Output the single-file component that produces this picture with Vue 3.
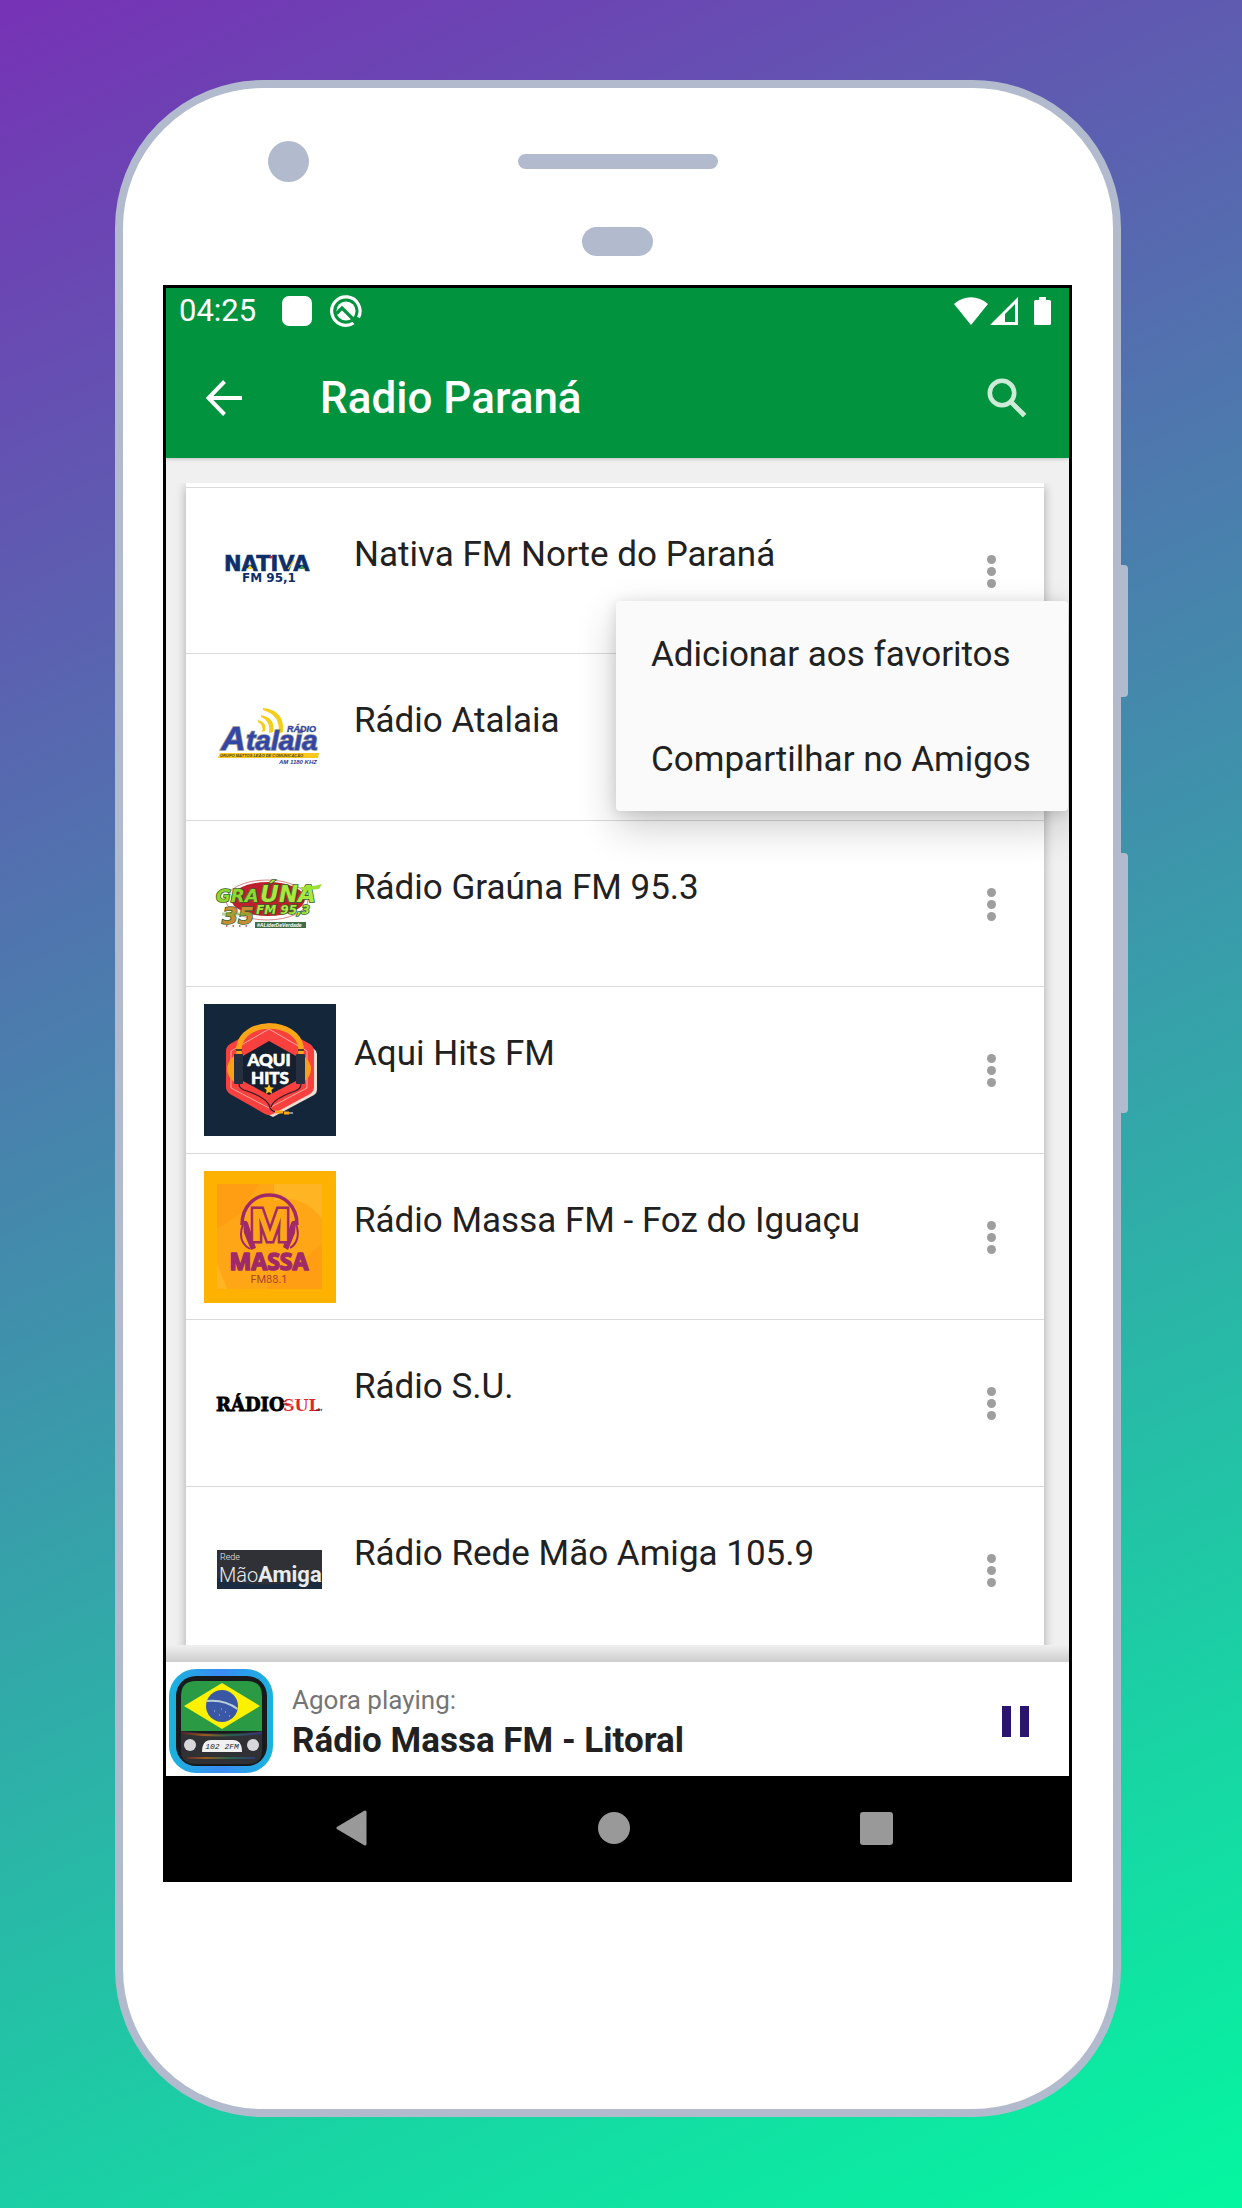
<template>
  <div class="page">
    <div class="phone">
      <i class="side-key side-key-power"></i>
      <i class="side-key side-key-volume"></i>

      <div class="phone-top">
        <i class="camera"></i>
        <i class="speaker"></i>
        <i class="sensor"></i>
      </div>

      <div class="screen">
        <header class="header">
          <div class="status-bar">
            <span class="clock">04:25</span>
            <i class="status-square"></i>
            <svg class="status-q" viewBox="0 0 32 32">
              <path d="M23.500 28A14.200 14.200 0 1 1 28.500 22.500" fill="none" stroke="#fff" stroke-width="3.200" />
              <circle cx="16" cy="16" r="9.600" fill="#fff" />
              <path d="M6.500 18.500l5.500-5.500L26.500 27.500" fill="none" stroke="#02933f" stroke-width="3.200" />
              <path d="M13 17.500l6 6" stroke="#fff" stroke-width="1" />
            </svg>
            <svg class="status-wifi" viewBox="0 0 34 28">
              <path d="M0 7C10-2 24-2 34 7L17 28z" fill="#fff" />
            </svg>
            <svg class="status-signal" viewBox="0 0 28 28">
              <path fill-rule="evenodd" d="M28 0v28H0zM25 7l-10 10v8h10z" fill="#fff" />
            </svg>
            <svg class="status-battery" viewBox="0 0 17 28">
              <path d="M5 0h7v3h3.500q1.500 0 1.500 1.500v22q0 1.500-1.500 1.500h-14Q0 28 0 26.500v-22Q0 3 1.500 3H5z" fill="#fff" />
            </svg>
          </div>
          <div class="app-bar">
            <button class="icon-btn" type="button" aria-label="Voltar">
              <svg width="36" height="36" viewBox="0 0 36 36">
                <path d="M18.500 1.500L2.500 18l16 16.500M2.500 18H36" fill="none" stroke="#fff" stroke-width="4" />
              </svg>
            </button>
            <h1 class="title">Radio Paraná</h1>
            <button class="icon-btn" type="button" aria-label="Buscar">
              <svg width="40" height="40" viewBox="0 0 40 40">
                <circle cx="15" cy="15" r="12.200" fill="none" stroke="#cdebd6" stroke-width="4.600" />
                <path d="M23 23h3l13 12.800-3.200 3.200L23 26z" fill="#cdebd6" stroke="#cdebd6" stroke-width="0.800" />
              </svg>
            </button>
          </div>
        </header>

        <main class="content">
          <ul class="stations">
            <li v-for="station in stations" :key="station.id" class="station">
              <svg class="logo" viewBox="0 0 132 132" aria-hidden="true">
                <g v-if="station.id === 'nativa'" fill="#0c2f6b">
                  <text x="20" y="66" class="dv" font-size="21" stroke="#0c2f6b" stroke-width="0.600">NATIVA</text>
                  <path d="M43 64l3-4 3 4z" fill="#f0d020" />
                  <path d="M65 51h4l-2 3z" fill="#d4262c" />
                  <path d="M84 64l6-9" stroke="#e8d22a" stroke-width="1.200" />
                  <path d="M95 64l3-4 3 4z" fill="#3a9b46" />
                  <text x="38" y="77" class="dv" font-size="12">FM 95,1</text>
                </g>

                <g v-else-if="station.id === 'atalaia'">
                  <path d="M59 37q22 2 20 24l-5 2q4-18-15-24z" fill="#f5cd1c" />
                  <path d="M57 44q15 3 12 17l-4 1q2-12-8-16z" fill="#f5cd1c" />
                  <path d="M54 49q10 3 7 11l-3 1q2-7-4-10z" fill="#f5cd1c" />
                  <g class="ls" fill="#3346a6" stroke="#8f9298" stroke-width="1.600" paint-order="stroke">
                    <text x="17" y="79" font-size="34">A</text>
                    <text x="42" y="79" font-size="28">talaia</text>
                    <text x="83" y="61" font-size="9" stroke-width="0.600">RÁDIO</text>
                  </g>
                  <path d="M16 82h99l-1 5H14z" fill="#f8c81d" />
                  <text x="16" y="86" class="ls" font-size="4" fill="#4b4428">GRUPO MATTOS LEÃO DE COMUNICAÇÃO</text>
                  <text x="75" y="93" class="ls" font-size="6" fill="#2b3990">AM 1180 KHZ</text>
                </g>

                <g v-else-if="station.id === 'grauna'">
                  <ellipse cx="63" cy="62" rx="41" ry="20" fill="none" stroke="#d0636a" stroke-width="0.800" />
                  <ellipse cx="64" cy="61" rx="37" ry="17" fill="#bd1f2d" />
                  <g class="dv-it" stroke="#35632a" stroke-width="1.600" paint-order="stroke">
                    <text x="12" y="64" font-size="18" fill="#8fd62e">GRA</text>
                    <text x="56" y="64" font-size="23" fill="#a9e83f">ÚNA</text>
                    <text x="18" y="86" font-size="23" fill="#c98d35">35</text>
                    <text x="52" y="76" font-size="12" fill="#a9e83f">FM 95,3</text>
                  </g>
                  <path d="M96 49q12 0 22-3l-3 5q-8 1-17 1z" fill="#9be037" />
                  <path d="M18 76h30" stroke="#6fae35" stroke-width="3" opacity="0.500" />
                  <path d="M22 88h24" stroke="#b0454b" stroke-width="1.500" stroke-dasharray="1.500 5" />
                  <rect x="51" y="84" width="51" height="6" fill="#3f6d47" />
                  <text x="53" y="89" class="ls" font-size="5" fill="#fff">#ALíderDeVerdade</text>
                </g>

                <g v-else-if="station.id === 'aqui'">
                  <rect width="132" height="132" fill="#14263a" />
                  <path d="M69 22l41 23q3 2 3 5v36q0 3-3 5l-41 22-12-6z" fill="#f0ded4" />
                  <path d="M61 20q4-2 8 0l37 20q4 3 4 7v36q0 4-4 7l-37 20q-4 2-8 0L26 90q-4-3-4-7V47q0-4 4-7z" fill="#f8413f" />
                  <path d="M65 25l38 22v37l-38 20-38-20V47z" fill="none" stroke="#ffc4b8" stroke-width="0.800" />
                  <path d="M30 52q-7 6-7 13t7 13zM100 52q7 6 7 13t-7 13z" fill="#f9a11b" />
                  <path d="M65 37l27 15v25L65 91 39 77V52z" fill="#14202f" />
                  <path d="M35 50v-7c4-28 57-28 62 0v7" fill="none" stroke="#fba518" stroke-width="5.500" />
                  <path d="M32 46h6M94 46h6" stroke="#14202f" stroke-width="1.500" />
                  <rect x="30" y="50" width="9" height="30" rx="1" fill="#252f40" />
                  <rect x="92" y="50" width="9" height="30" rx="1" fill="#252f40" />
                  <path d="M35 80q0 4 5 6 25 8 26 18 2 4 8 4M97 80q0 5-6 7-22 8-24 16" fill="none" stroke="#2c1a25" stroke-width="1.200" />
                  <path d="M71 108h8M80 109h5" stroke="#fba518" stroke-width="3" />
                  <path d="M85 109h4" stroke="#fff" stroke-width="1" />
                  <g class="lato" fill="#fff" stroke="#fff" stroke-width="0.600" text-anchor="middle">
                    <text x="65" y="62" font-size="17">AQUI</text>
                    <text x="66" y="80" font-size="17">HITS</text>
                  </g>
                  <path d="M65 80l1.500 3.300 3.500.4-2.600 2.400.7 3.600L65 88l-3.100 1.700.7-3.600L60 83.700l3.500-.4z" fill="#fdbf1c" />
                </g>

                <g v-else-if="station.id === 'massa'">
                  <rect width="132" height="132" fill="#ffb100" />
                  <rect x="13" y="13" width="105" height="105" fill="#ffa617" />
                  <path d="M13 58l24-16 18-29H13zM62 118l56-45v45z" fill="#ff9410" opacity="0.500" />
                  <path d="M13 92l10 26H13zM70 13h48v35Q98 22 70 30z" fill="#ffbe2d" opacity="0.600" />
                  <g fill="none" stroke="#a02a68">
                    <path d="M38 54c0-40 55-40 55 0" stroke-width="3.500" />
                    <path d="M39 53c-4 11-2 20 7 25M92 53c4 11 1 20-6 24" stroke-width="2" />
                  </g>
                  <path d="M39 50q4-1 5 2l8 25-5 2-7-17zM92 50q-4-1-5 2l-8 24 5 3 7-17z" fill="#a02a68" />
                  <text x="66" y="70" class="rb" font-size="45" text-anchor="middle" fill="#ffa617" stroke="#a02a68" stroke-width="5" paint-order="stroke">M</text>
                  <text x="65" y="99" class="os" font-size="23" text-anchor="middle" fill="#a02a68" stroke="#a02a68" stroke-width="1.600" stroke-linejoin="round">MASSA</text>
                  <text x="65" y="112" class="rr" font-size="11" text-anchor="middle" fill="#a8452e">FM88.1</text>
                </g>

                <g v-else-if="station.id === 'sul'">
                  <text x="12" y="74" class="serif" font-size="18" stroke="#000" stroke-width="0.800">RÁDIO</text>
                  <text x="79" y="74" class="serif" font-size="16" fill="#e2232e">SUL</text>
                  <path d="M79 66l14-3M80 70l12-2M96 61l4 12" stroke="#fff" stroke-width="0.800" />
                  <text x="111" y="74" class="ls" font-size="4">.net</text>
                </g>

                <g v-else-if="station.id === 'amiga'">
                  <rect x="13" y="46" width="105" height="39" fill="#303136" />
                  <path d="M13 74q50 14 105-2v13H13z" fill="#1c2c40" />
                  <g fill="#e9ecef">
                    <text x="16" y="56" class="rl" font-size="9">Rede</text>
                    <text x="15" y="78" class="rl" font-size="20">Mão</text>
                    <text x="54" y="78" class="rb" font-size="22">Amiga</text>
                  </g>
                </g>
              </svg>

              <span class="name">{{ station.name }}</span>

              <button
                class="more-btn"
                type="button"
                :aria-label="'Opções de ' + station.name"
                @click="toggleMenu(station.id)"
              >
                <i></i><i></i><i></i>
              </button>

              <div v-if="openMenu === station.id" class="popup">
                <button
                  v-for="action in actions"
                  :key="action"
                  class="popup-item"
                  type="button"
                  @click="openMenu = null"
                >
                  {{ action }}
                </button>
              </div>
            </li>
          </ul>
        </main>

        <div class="player-shadow"></div>
        <section class="player">
          <svg class="player-icon" viewBox="0 0 104 104" aria-hidden="true">
            <defs>
              <linearGradient id="frame" x1="0" x2="1">
                <stop offset="0" stop-color="#19b4dc" />
                <stop offset="0.500" stop-color="#3a8bf5" />
                <stop offset="1" stop-color="#19b4dc" />
              </linearGradient>
              <linearGradient id="glow" x1="0" x2="1">
                <stop offset="0" stop-color="#4d2030" />
                <stop offset="0.300" stop-color="#9a5a1e" />
                <stop offset="0.600" stop-color="#25654c" />
                <stop offset="1" stop-color="#3a2d80" />
              </linearGradient>
            </defs>
            <rect width="104" height="104" rx="27" fill="url(#frame)" />
            <rect x="7" y="7" width="91" height="90" rx="20" fill="#17191b" />
            <path d="M12 62V27q0-15 15-15h51q15 0 15 15v35z" fill="#2a9a45" />
            <path d="M53 14l38 23-38 23-38-23z" fill="#fdf100" />
            <circle cx="53" cy="37" r="16" fill="#3a57a6" />
            <path d="M37.500 32q18-2 31 8" fill="none" stroke="#b9cfd8" stroke-width="2" />
            <path d="M45 42h1M50 46h1M56 43h1M60 47h1M52 40h1" stroke="#b9cfd8" stroke-width="1" />
            <path d="M12 62q40 5 81 0v20q0 13-14 13H27q-15 0-15-13z" fill="#303134" />
            <path d="M12 64q40 5 81 0M18 89h68" fill="none" stroke="url(#glow)" stroke-width="2" />
            <circle cx="21" cy="76" r="6" fill="#d8d8da" />
            <circle cx="84" cy="76" r="6" fill="#d8d8da" />
            <path d="M33 83q0-12 9-12h22q9 0 9 12z" fill="#f1f1f1" />
            <text x="53" y="80" class="lcd" font-size="8" text-anchor="middle" fill="#222">102 2FM</text>
          </svg>
          <div class="player-text">
            <span class="player-label">Agora playing:</span>
            <strong class="player-name">Rádio Massa FM - Litoral</strong>
          </div>
          <button class="icon-btn pause-btn" type="button" aria-label="Pausar">
            <svg width="27" height="31" viewBox="0 0 27 31">
              <path d="M0 0h9v31H0zM18 0h9v31h-9z" fill="#29146e" />
            </svg>
          </button>
        </section>

        <nav class="nav-bar">
          <button class="icon-btn" type="button" aria-label="Anterior">
            <svg width="32" height="36" viewBox="0 0 32 36">
              <path d="M2 18L29 2v32z" fill="#999" stroke="#999" stroke-width="3" stroke-linejoin="round" />
            </svg>
          </button>
          <button class="icon-btn" type="button" aria-label="Início">
            <svg width="32" height="32" viewBox="0 0 32 32"><circle cx="16" cy="16" r="16" fill="#999" /></svg>
          </button>
          <button class="icon-btn" type="button" aria-label="Recentes">
            <svg width="33" height="33" viewBox="0 0 33 33"><rect width="33" height="33" rx="3" fill="#999" /></svg>
          </button>
        </nav>
      </div>
    </div>
  </div>
</template>

<script setup>
import { ref } from "vue";

const stations = [
  { id: "nativa", name: "Nativa FM Norte do Paraná" },
  { id: "atalaia", name: "Rádio Atalaia" },
  { id: "grauna", name: "Rádio Graúna FM 95.3" },
  { id: "aqui", name: "Aqui Hits FM" },
  { id: "massa", name: "Rádio Massa FM - Foz do Iguaçu" },
  { id: "sul", name: "Rádio S.U." },
  { id: "amiga", name: "Rádio Rede Mão Amiga 105.9" },
];

const actions = ["Adicionar aos favoritos", "Compartilhar no Amigos"];

const openMenu = ref("nativa");

const toggleMenu = (id) => {
  openMenu.value = openMenu.value === id ? null : id;
};
</script>

<style>
body {
  margin: 0;
}
</style>

<style scoped>
.page {
  box-sizing: border-box;
  min-height: 100vh;
  padding: 80px 121px 91px 115px;
  background: linear-gradient(155deg, #7632b5, #04f7a0);
  font-family: Roboto, "Liberation Sans", sans-serif;
  color: #212121;
}

.phone {
  position: relative;
  padding: 53px 41px 227px 40px;
  border: 8px solid #b2bbcd;
  border-radius: 148px;
  background: #fff;
}

.side-key {
  position: absolute;
  right: -15px;
  width: 8px;
  border-radius: 0 4px 4px 0;
  background: #b2bbcd;
}

.side-key-power {
  top: 477px;
  height: 132px;
}

.side-key-volume {
  top: 765px;
  height: 260px;
}

.phone-top {
  display: grid;
  grid-template-columns: 1fr auto 1fr;
  align-items: center;
  justify-items: center;
  row-gap: 45px;
  padding-bottom: 29px;
}

.camera {
  justify-self: start;
  width: 41px;
  height: 41px;
  margin-left: 105px;
  border-radius: 50%;
  background: #b2bbcd;
}

.speaker {
  width: 200px;
  height: 15px;
  border-radius: 8px;
  background: #b2bbcd;
}

.sensor {
  grid-column: 2;
  width: 71px;
  height: 29px;
  border-radius: 15px;
  background: #b2bbcd;
}

.screen {
  border: 3px solid #000;
  background: #f0f0f0;
  overflow: hidden;
}

.header {
  position: relative;
  background: #02933f;
  box-shadow: 0 1px 4px rgba(0, 0, 0, 0.2);
  color: #fff;
}

.status-bar {
  display: flex;
  align-items: center;
  height: 46px;
  padding: 0 18px 0 13px;
}

.clock {
  font-size: 31px;
  line-height: 36px;
}

.status-square {
  width: 30px;
  height: 30px;
  margin: 0 18px 0 26px;
  border-radius: 7px;
  background: #fff;
}

.status-q {
  width: 32px;
  height: 32px;
}

.status-wifi {
  width: 34px;
  height: 28px;
  margin-left: auto;
}

.status-signal {
  width: 28px;
  height: 28px;
  margin: 0 16px 0 2px;
}

.status-battery {
  width: 17px;
  height: 28px;
}

.app-bar {
  display: flex;
  align-items: center;
  box-sizing: border-box;
  height: 124px;
  padding: 3px 30px 0 28px;
}

.icon-btn {
  display: flex;
  align-items: center;
  justify-content: center;
  padding: 12px;
  border: none;
  background: transparent;
  cursor: pointer;
}

.title {
  flex: 1;
  margin: 0 0 0 66px;
  font-size: 44px;
  font-weight: 500;
  line-height: 52px;
}

.content {
  height: 1162px;
  margin-top: 25px;
  padding: 0 25px 0 20px;
  overflow: hidden;
}

.stations {
  margin: 0;
  padding: 4px 0 0;
  list-style: none;
  background: #fff;
  box-shadow: 0 4px 10px rgba(0, 0, 0, 0.3);
}

.station {
  position: relative;
  display: flex;
  align-items: flex-start;
  box-sizing: border-box;
  height: 167px;
  padding: 17px 35px 0 18px;
  border-top: 1px solid #dadada;
}

.station:nth-child(odd) {
  height: 166px;
}

.logo {
  flex: none;
  width: 132px;
  height: 132px;
}

.name {
  flex: 1;
  margin: 29px 0 0 18px;
  font-size: 35px;
  line-height: 42px;
}

.more-btn {
  display: flex;
  flex-direction: column;
  align-items: center;
  justify-content: center;
  gap: 3px;
  width: 36px;
  height: 132px;
  padding: 0;
  border: none;
  background: transparent;
  cursor: pointer;
}

.more-btn i {
  width: 9px;
  height: 9px;
  border-radius: 50%;
  background: #9e9e9e;
}

.popup {
  position: absolute;
  z-index: 1;
  top: 113px;
  right: -24px;
  display: flex;
  flex-direction: column;
  width: 452px;
  border-radius: 4px;
  background: #fafafa;
  box-shadow: 0 16px 40px rgba(0, 0, 0, 0.2), 0 2px 14px rgba(0, 0, 0, 0.12);
}

.popup-item {
  height: 105px;
  padding: 2px 35px 0;
  border: none;
  background: transparent;
  color: inherit;
  font-family: inherit;
  font-size: 35px;
  line-height: 42px;
  text-align: left;
  white-space: nowrap;
  cursor: pointer;
}

.player-shadow {
  position: relative;
  height: 17px;
  background: linear-gradient(#f0f0f0, #cdcdcd);
}

.player {
  position: relative;
  display: flex;
  align-items: center;
  box-sizing: border-box;
  height: 114px;
  padding: 4px 28px 0 3px;
  background: #fff;
}

.player-icon {
  width: 104px;
  height: 104px;
}

.player-text {
  display: flex;
  flex: 1;
  flex-direction: column;
  padding: 6px 0 0 19px;
}

.player-label {
  color: #757575;
  font-size: 26px;
  line-height: 34px;
}

.player-name {
  font-size: 35px;
  font-weight: 700;
  line-height: 48px;
}

.nav-bar {
  display: flex;
  align-items: center;
  justify-content: space-between;
  height: 103px;
  padding: 2px 164px 0 158px;
  border-bottom: 1px solid #000;
  box-sizing: border-box;
  background: #000;
}

/* lettering inside the station logos */
.dv {
  font-family: "DejaVu Sans", sans-serif;
  font-weight: 700;
}

.dv-it {
  font-family: "DejaVu Sans", sans-serif;
  font-style: italic;
  font-weight: 700;
}

.ls {
  font-family: "Liberation Sans", sans-serif;
  font-style: italic;
  font-weight: 700;
}

.lato {
  font-family: Lato, sans-serif;
  font-weight: 900;
}

.os {
  font-family: "Open Sans", sans-serif;
  font-weight: 700;
}

.rb {
  font-family: Roboto, sans-serif;
  font-weight: 700;
}

.rl {
  font-family: Roboto, sans-serif;
  font-weight: 300;
}

.rr {
  font-family: Roboto, sans-serif;
  font-weight: 400;
}

.serif {
  font-family: "DejaVu Serif", serif;
  font-weight: 700;
}

.lcd {
  font-family: "Liberation Mono", monospace;
  font-style: italic;
}
</style>
